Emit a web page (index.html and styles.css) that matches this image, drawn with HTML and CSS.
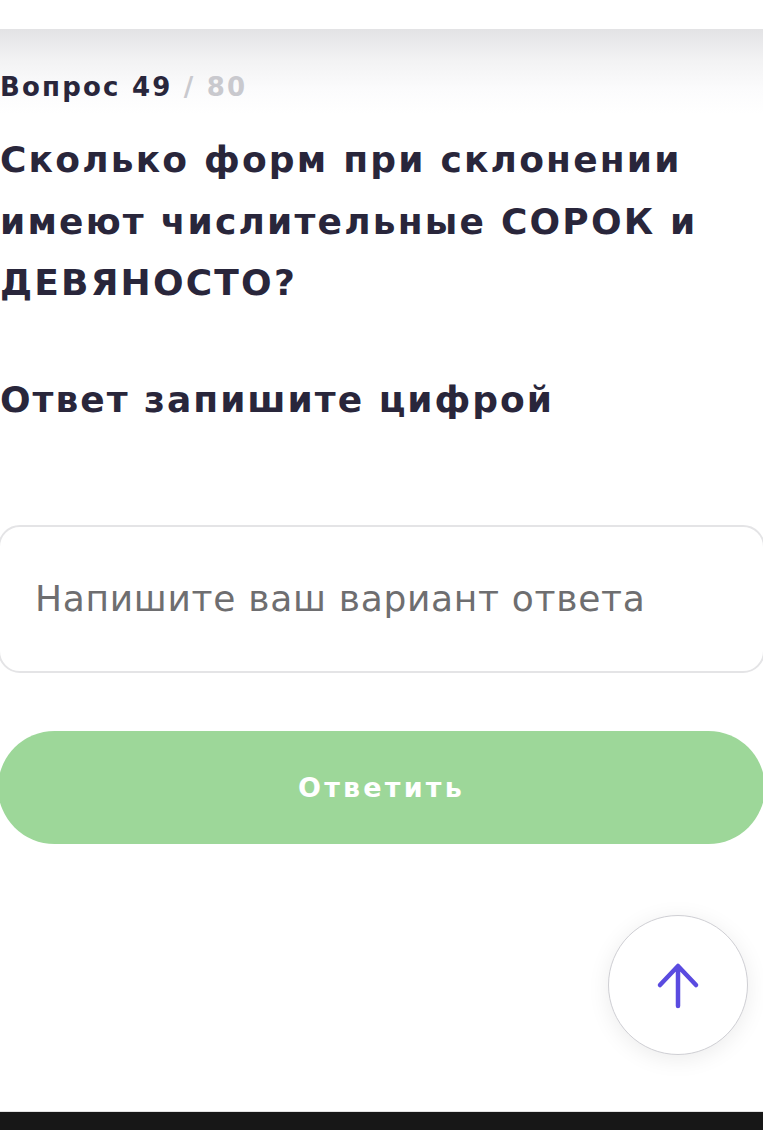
FILE: index.html
```html
<!DOCTYPE html>
<html lang="ru">
<head>
    <meta charset="UTF-8">
    <meta name="viewport" content="width=device-width, initial-scale=1.0">
    <title>Вопрос 49</title>
    <link rel="stylesheet" href="styles.css">
</head>

<body>
    <div class="page">
        <!-- шапка -->
        <div class="topbar"></div>

        <!-- вопрос -->
        <div class="quiz">
            <p class="counter"><span class="current">Вопрос 49</span> <span class="total">/ 80</span></p>
            <h1 class="question">Сколько форм при склонении имеют числительные СОРОК и ДЕВЯНОСТО?</h1>
            <p class="hint">Ответ запишите цифрой</p>

            <input class="answer" type="text" placeholder="Напишите ваш вариант ответа">
            <button class="submit" type="button">Ответить</button>
        </div>

        <!-- наверх -->
        <a class="scrollTop" href="javascript:;">
            <svg width="48" height="48" viewBox="0 0 48 48" fill="none">
                <path d="M24 6 V45 M6 24 L24 5 L42 24" stroke="#5a4be0" stroke-width="4.5" stroke-linecap="round" stroke-linejoin="round" />
            </svg>
        </a>

        <div class="navbar"></div>
    </div>
</body>

</html>
```

FILE: styles.css
```css
* {
    padding: 0;
    margin: 0;
    box-sizing: border-box;
}

body {
    font-family: "DejaVu Sans", "Noto Sans", sans-serif;
    color: #29263b;
    background: #fff;
    overflow: hidden;
}

.page {
    position: relative;
    height: 1130px;
    display: flex;
    flex-direction: column;
}

.topbar {
    height: 29px;
    background: #fff;
}

.quiz {
    flex: 1;
    padding-top: 43px;
    background: linear-gradient(to bottom, #e3e3e5 0, #f2f2f3 30px, #fbfbfc 60px, #fff 85px);
    display: flex;
    flex-direction: column;
}

.counter {
    font-size: 26px;
    line-height: 30px;
    font-weight: bold;
    letter-spacing: 2.2px;
}

.counter .total {
    color: #c9c9ce;
}

.question {
    margin-top: 27px;
    font-size: 36px;
    line-height: 61.5px;
    font-weight: bold;
    letter-spacing: 2.2px;
}

.hint {
    margin-top: 61px;
    font-size: 36px;
    line-height: 50px;
    font-weight: bold;
    letter-spacing: 2px;
}

.answer {
    margin: 100px -2px 0;
    height: 148px;
    border: 2px solid #e4e4e6;
    border-radius: 22px;
    padding: 0 0 0 35px;
    font-family: inherit;
    font-size: 36px;
    letter-spacing: 0.7px;
    color: #29263b;
    background: #fff;
    outline: none;
}

.answer::placeholder {
    color: #6e6e70;
}

.submit {
    margin: 58px -2px 0;
    height: 113px;
    border: none;
    border-radius: 57px;
    background-color: #9dd799;
    color: #fff;
    font-family: inherit;
    font-size: 27px;
    font-weight: bold;
    letter-spacing: 3.2px;
}

.scrollTop {
    position: absolute;
    left: 608px;
    top: 915px;
    width: 140px;
    height: 140px;
    border-radius: 50%;
    border: 1.5px solid #cfcfd4;
    background: #fff;
    box-shadow: 0 4px 22px rgba(0, 0, 0, 0.08);
    display: flex;
    align-items: center;
    justify-content: center;
}

.navbar {
    height: 19px;
    background: #171717;
    border-top: 1px solid #e2e2e2;
}
```
